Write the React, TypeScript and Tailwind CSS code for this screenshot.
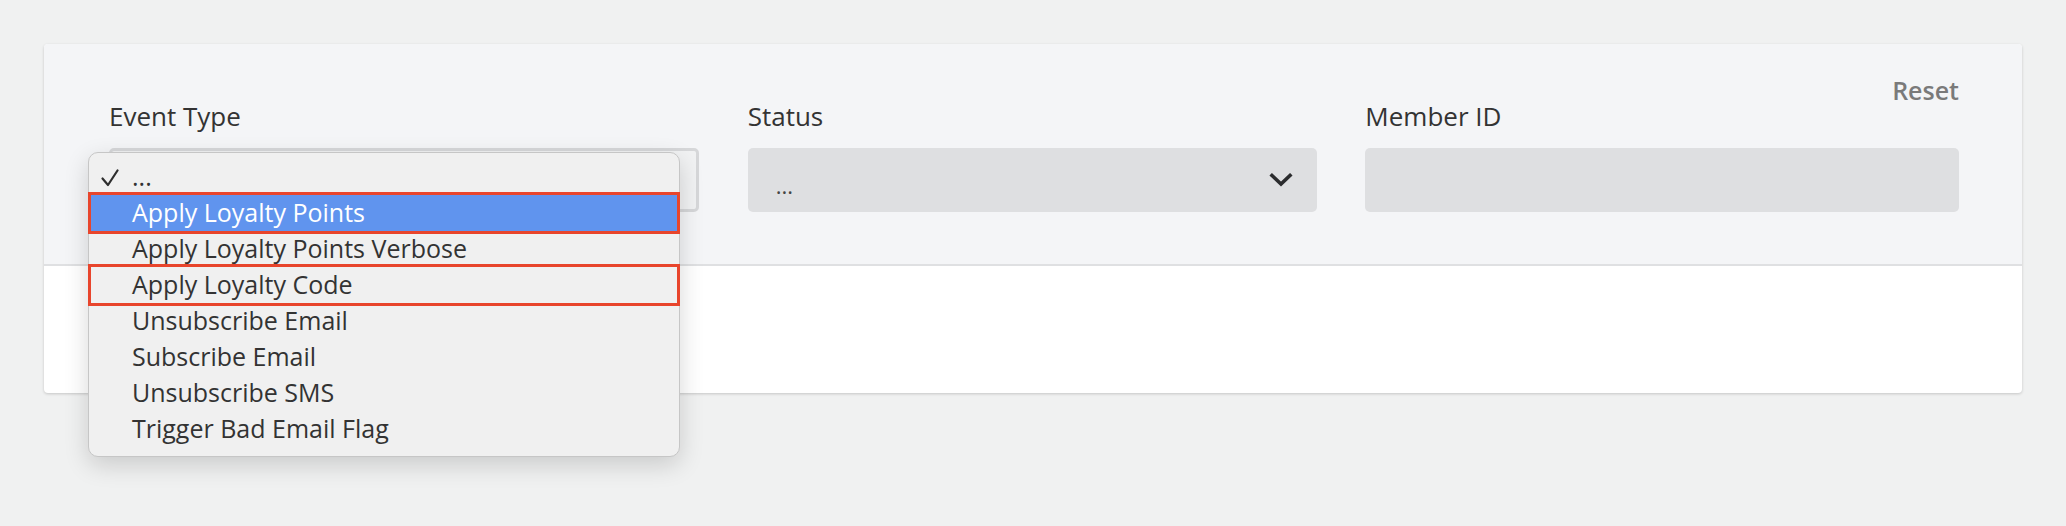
import React from 'react'

const options = [
  'Apply Loyalty Points',
  'Apply Loyalty Points Verbose',
  'Apply Loyalty Code',
  'Unsubscribe Email',
  'Subscribe Email',
  'Unsubscribe SMS',
  'Trigger Bad Email Flag',
]

function ChevronDown() {
  return (
    <svg width="24" height="14" viewBox="0 0 24 14" fill="none">
      <path d="M3 2.5 L12 11 L21 2.5" stroke="#2b2c2e" strokeWidth="3.6" strokeLinecap="square" />
    </svg>
  )
}

function CheckMark() {
  return (
    <svg width="18" height="18" viewBox="0 0 18 18" fill="none">
      <path d="M1.5 9.5 L7 16 L16.5 1.5" stroke="#2e2e2e" strokeWidth="2.2" strokeLinecap="round" strokeLinejoin="round" />
    </svg>
  )
}

function OptionsMenu() {
  return (
    <div className="absolute left-[-21px] top-[4px] z-10 w-[592px] rounded-[10px] border border-[#c6c6c6] bg-[#f0f0f0] pt-[6px] pb-[9px] text-[25px] shadow-[0_8px_24px_rgba(0,0,0,0.16)]">
      <div className="flex h-[36px] items-center">
        <span className="flex w-[43px] pl-[12px] pt-[2px]">
          <CheckMark />
        </span>
        <span>...</span>
      </div>
      {options.map((opt, i) => {
        const active = i === 0
        const marked = i === 0 || i === 2
        return (
          <div
            key={opt}
            className={`relative flex h-[36px] items-center pl-[43px] ${active ? 'bg-[#6094ee] text-white' : 'text-[#333333]'}`}
          >
            {opt}
            {marked && (
              <div className="pointer-events-none absolute -top-[3px] -bottom-[3px] -left-px -right-px border-[3px] border-[#e8452c]"></div>
            )}
          </div>
        )
      })}
    </div>
  )
}

export default function App() {
  return (
    <div
      className="min-h-[526px] bg-[#f0f1f1] px-[44px] pt-[44px] text-[#333333]"
      style={{ fontFamily: '"Open Sans", "Liberation Sans", sans-serif' }}
    >
      <div className="rounded-[4px] bg-white shadow-[0_1px_3px_rgba(0,0,0,0.18)]">
        <div className="rounded-t-[4px] border-b-2 border-[#dfe0e2] bg-[#f4f5f7] pl-[65px] pr-[63px] pt-[30px] pb-[52px] text-[26px]">
          <div className="flex h-[32px] justify-end">
            <button className="text-[25px] leading-[32px] font-semibold text-[#7a7a7a]">Reset</button>
          </div>
          <div className="flex">
            <div className="relative w-[590px]">
              <div className="leading-[20px]">Event Type</div>
              <div className="relative mt-[22px]">
                <div className="h-[64px] rounded-[5px] border-[3px] border-[#d6d7d9] bg-[#f1f2f3]"></div>
                <OptionsMenu />
              </div>
            </div>
            <div className="ml-[49px] w-[570px]">
              <div className="leading-[20px]">Status</div>
              <div className="mt-[22px] flex h-[64px] items-center justify-between rounded-[5px] bg-[#dedfe1] pl-[28px] pr-[24px]">
                <span className="pt-[10px] text-[22px] text-[#444]">...</span>
                <ChevronDown />
              </div>
            </div>
            <div className="ml-[48px] w-[594px]">
              <div className="leading-[20px]">Member ID</div>
              <div className="mt-[22px] h-[64px] rounded-[5px] bg-[#dedfe1]"></div>
            </div>
          </div>
        </div>
        <div className="h-[127px]"></div>
      </div>
    </div>
  )
}
